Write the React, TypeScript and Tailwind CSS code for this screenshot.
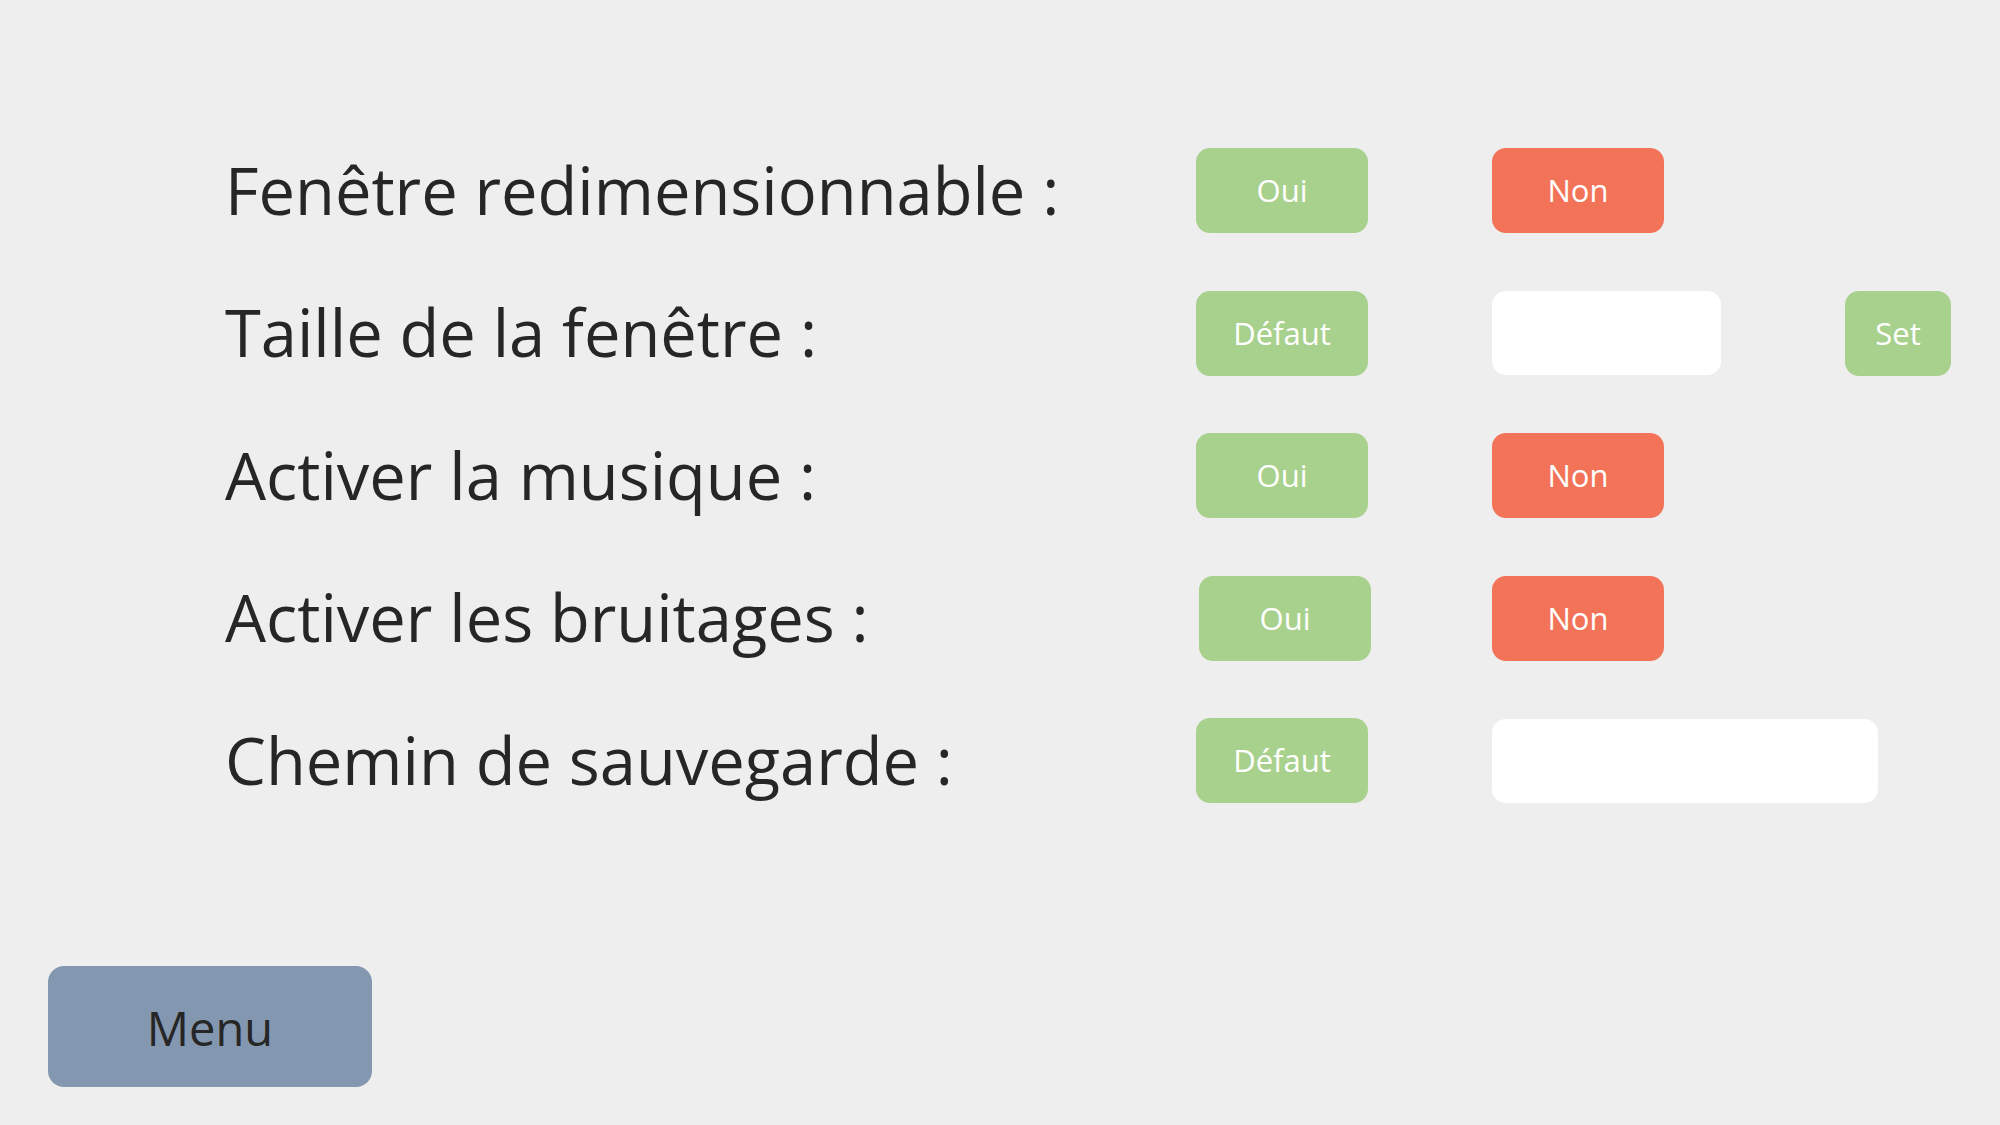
const font = { fontFamily: "'Open Sans', 'Noto Sans', sans-serif" };

function Btn({ label, tone, className = "" }: { label: string; tone: "yes" | "no"; className?: string }) {
  return (
    <div
      className={
        "flex h-[85px] items-center justify-center rounded-[14px] text-[31px] text-white " +
        (tone === "yes" ? "bg-[#a9d18e] " : "bg-[#f37359] ") +
        className
      }
    >
      {label}
    </div>
  );
}

function Field({ className = "" }: { className?: string }) {
  return <div className={"h-[84px] rounded-[14px] bg-white " + className} />;
}

function Row({ label, children }: { label: string; children: React.ReactNode }) {
  return (
    <div className="flex h-[85px] items-center">
      <div className="w-[971px] shrink-0 text-[65px] text-[#262626]">{label}</div>
      <div className="flex items-center gap-[124px]">{children}</div>
    </div>
  );
}

export default function App() {
  return (
    <div className="flex h-[1125px] w-[2000px] flex-col bg-[#eeeeee]" style={font}>
      <div className="flex flex-col gap-[57.5px] pl-[225px] pt-[148px]">
        <Row label="Fenêtre redimensionnable :">
          <Btn label="Oui" tone="yes" className="w-[172px]" />
          <Btn label="Non" tone="no" className="w-[172px]" />
        </Row>
        <Row label="Taille de la fenêtre :">
          <Btn label="Défaut" tone="yes" className="w-[172px]" />
          <Field className="w-[229px]" />
          <Btn label="Set" tone="yes" className="w-[106px]" />
        </Row>
        <Row label="Activer la musique :">
          <Btn label="Oui" tone="yes" className="w-[172px]" />
          <Btn label="Non" tone="no" className="w-[172px]" />
        </Row>
        <Row label="Activer les bruitages :">
          <Btn label="Oui" tone="yes" className="ml-[3px] w-[172px]" />
          <Btn label="Non" tone="no" className="-ml-[3px] w-[172px]" />
        </Row>
        <Row label="Chemin de sauvegarde :">
          <Btn label="Défaut" tone="yes" className="w-[172px]" />
          <Field className="w-[386px]" />
        </Row>
      </div>
      <div className="mt-[163px] pl-[48px]">
        <div className="flex h-[121px] w-[324px] items-center justify-center rounded-[16px] bg-[#8497b0] pt-1 text-[47px] text-[#262626]">
          Menu
        </div>
      </div>
    </div>
  );
}
